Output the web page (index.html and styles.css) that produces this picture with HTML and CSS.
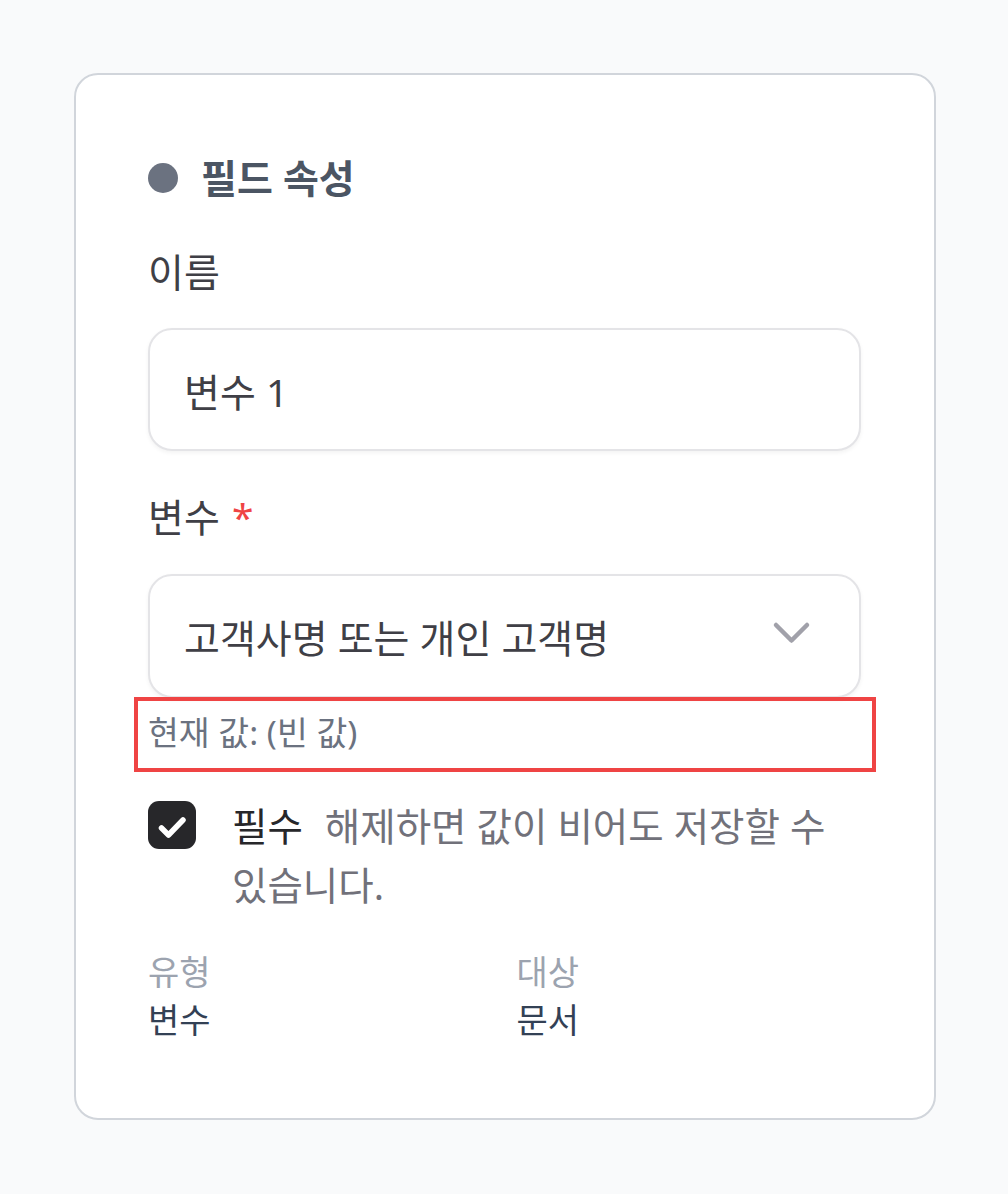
FILE: index.html
```html
<!DOCTYPE html>
<html lang="ko">
<head>
<meta charset="utf-8">
<title>필드 속성</title>
<link rel="stylesheet" href="styles.css">
</head>
<body>
<div class="page">
  <section class="card">
    <h2 class="card-title"><span class="dot"></span>필드 속성</h2>

    <div class="field">
      <label class="label">이름</label>
      <div class="control">변수 1</div>
    </div>

    <div class="field field-var">
      <label class="label">변수 <span class="req">*</span></label>
      <div class="control select">
        <span>고객사명 또는 개인 고객명</span>
        <svg class="chev" width="40" height="26" viewBox="0 0 40 26" aria-hidden="true">
          <polyline points="4,4 19.5,19.5 35,4" fill="none" stroke="#a1a1aa" stroke-width="4.5" stroke-linecap="round" stroke-linejoin="round"/>
        </svg>
      </div>
      <div class="helper">현재 값: (빈 값)</div>
    </div>

    <div class="check-row">
      <span class="checkbox">
        <svg width="48" height="48" viewBox="0 0 48 48" aria-hidden="true">
          <polyline points="13.5,27 20.5,34 35,19" fill="none" stroke="#ffffff" stroke-width="5.5" stroke-linecap="round" stroke-linejoin="round"/>
        </svg>
      </span>
      <p class="check-text"><span class="check-label">필수</span> <span class="check-desc">해제하면 값이 비어도 저장할 수 있습니다.</span></p>
    </div>

    <div class="meta">
      <div class="meta-item">
        <div class="meta-label">유형</div>
        <div class="meta-value">변수</div>
      </div>
      <div class="meta-item">
        <div class="meta-label">대상</div>
        <div class="meta-value">문서</div>
      </div>
    </div>
  </section>
</div>
</body>
</html>
```

FILE: styles.css
```css
html, body {
  margin: 0;
  padding: 0;
  background: #f9fafb;
}

body {
  font-family: "Noto Sans", "Noto Sans CJK KR", sans-serif;
  color: #3f3f46;
}

.page {
  padding: 73px 0 0 74px;
}

.card {
  box-sizing: border-box;
  width: 862px;
  height: 1047px;
  background: #ffffff;
  border: 2px solid #d1d5db;
  border-radius: 24px;
  padding: 77px 73px 0 72px;
}

.card-title {
  display: flex;
  align-items: center;
  gap: 23px;
  margin: 0;
  font-size: 39px;
  line-height: 52px;
  font-weight: 700;
  color: #4b5563;
}

.dot {
  width: 30px;
  height: 30px;
  border-radius: 50%;
  background: #6b7280;
  margin-top: -1px;
}

.field {
  display: flex;
  flex-direction: column;
  margin-top: 42px;
}

.field-var {
  margin-top: 40px;
}

.label {
  font-size: 39px;
  line-height: 52px;
  font-weight: 400;
  color: #3f3f46;
}

.req {
  color: #ef4444;
  margin-left: 2px;
}

.control {
  box-sizing: border-box;
  margin-top: 30px;
  height: 123px;
  border: 2px solid #e4e4e7;
  border-radius: 24px;
  background: #ffffff;
  box-shadow: 0 2px 4px rgba(0, 0, 0, 0.05);
  padding: 0 34px;
  display: flex;
  align-items: center;
  font-size: 39px;
  color: #3f3f46;
}

.select {
  margin-top: 31px;
  height: 124px;
  justify-content: space-between;
  padding-right: 47px;
}

.chev {
  display: block;
  margin-top: -4px;
}

.helper {
  position: relative;
  margin-top: 12px;
  font-size: 33.5px;
  line-height: 45px;
  color: #6b7280;
}

.helper::after {
  content: "";
  position: absolute;
  top: -13px;
  bottom: -17px;
  left: -14px;
  right: -15px;
  border: 4px solid #ef4444;
  pointer-events: none;
}

.check-row {
  display: flex;
  align-items: flex-start;
  gap: 36px;
  margin-top: 42px;
}

.checkbox {
  flex: none;
  width: 48px;
  height: 48px;
  margin-top: 4px;
  border-radius: 11px;
  background: #27272a;
  display: flex;
}

.check-text {
  margin: 0;
  font-size: 38.5px;
  line-height: 58.5px;
  color: #71717a;
  word-break: keep-all;
}

.check-label {
  color: #27272a;
  font-weight: 400;
  margin-right: 12px;
}

.meta {
  display: grid;
  grid-template-columns: 1fr 1fr;
  column-gap: 24px;
  margin-top: 34px;
}

.meta-label {
  font-size: 34px;
  line-height: 48px;
  color: #9ca3af;
}

.meta-value {
  font-size: 34px;
  line-height: 48px;
  color: #334155;
}
```
